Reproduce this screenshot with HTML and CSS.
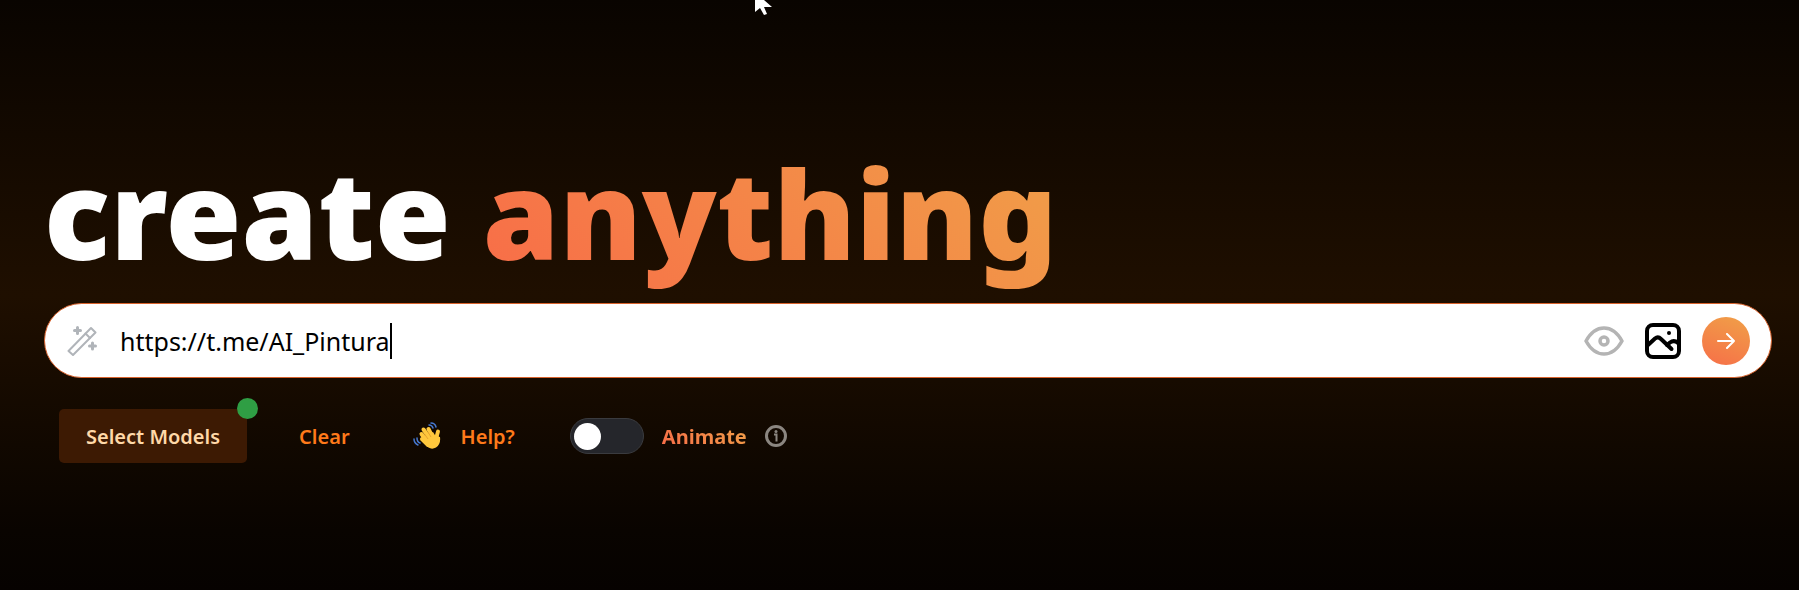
FILE: index.html
```html
<!DOCTYPE html>
<html lang="en">
<head>
    <meta charset="UTF-8">
    <meta name="viewport" content="width=device-width, initial-scale=1.0">
    <title>create anything</title>
    <link rel="stylesheet" href="styles.css">
</head>
<body>
    <svg class="cursor" viewBox="0 0 18 16" aria-hidden="true">
        <path d="M0 0V12L5 8L9 15L12 14L9 7H17L9 0Z" fill="#fff"/>
    </svg>

    <main class="hero">
        <h1>create <span class="gradient-text">anything</span></h1>

        <form class="prompt-bar">
            <svg class="wand" viewBox="0 0 30 30" aria-hidden="true">
                <g fill="none" stroke="#b0b4b9" stroke-width="2" stroke-linejoin="round" stroke-linecap="round">
                    <path d="M1.500 25L24 2L28.500 6.500L6 29Z"/>
                    <path d="M18.500 7.500L23 12"/>
                    <path d="M10.500 1.500V7.500M7.500 4.500H13.500M25.500 17V23M22.500 20H28.500" stroke-width="3"/>
                </g>
            </svg>
            <input type="text" class="prompt-input" aria-label="Prompt" value="https://t.me/AI_Pintura">
            <span class="caret"></span>

            <div class="prompt-tools">
                <button type="button" class="icon-button" aria-label="Preview">
                    <svg class="eye" viewBox="0 0 40 30" fill="none" stroke="#b4b4b4" stroke-width="3.500" stroke-linejoin="round">
                        <path d="M2 15C7 6 13 2 20 2S33 6 38 15C33 24 27 28 20 28S7 24 2 15Z"/>
                        <circle cx="20" cy="15" r="4"/>
                    </svg>
                </button>
                <button type="button" class="icon-button" aria-label="Add image">
                    <svg class="picture" viewBox="0 0 36 36" fill="none" stroke="#000" stroke-width="4" stroke-linecap="round" stroke-linejoin="round">
                        <rect x="2" y="2" width="32" height="32" rx="6"/>
                        <path d="M3 22L10 15.500Q13 13 16 16L26.500 26"/>
                        <path d="M22 22L25 19.500Q29 16.500 33 20"/>
                        <circle cx="24" cy="10" r="2" fill="#000" stroke="none"/>
                    </svg>
                </button>
                <button type="submit" class="go-button" aria-label="Create">
                    <svg class="arrow" viewBox="0 0 18 16" fill="none" stroke="#fff" stroke-width="2" stroke-linecap="round" stroke-linejoin="round">
                        <path d="M1 8H17M10 1L17 8L10 15"/>
                    </svg>
                </button>
            </div>
        </form>

        <div class="options">
            <button type="button" class="models">Select Models<span class="dot"></span></button>
            <button type="button" class="text-button clear">Clear</button>
            <button type="button" class="text-button help">
                <svg class="wave" viewBox="0 0 28 28" aria-hidden="true">
                    <g stroke="#ffc83d" stroke-linecap="round" fill="none" stroke-width="4">
                        <path d="M18 18L10.500 7.500"/>
                        <path d="M20 16L15.500 7"/>
                        <path d="M14 20L8.500 12"/>
                        <path d="M15 23L9 17"/>
                        <path d="M24 19Q23 14 25 9.500"/>
                    </g>
                    <path d="M11 14L20 10L22.500 14L27 15Q28 22 23 25.500Q17 29 12 22Z" fill="#ffc83d"/>
                    <path d="M11.500 12L15 17M15 10L18 15" stroke="#e9a52e" stroke-width="1" fill="none"/>
                    <g stroke="#4678cf" stroke-width="1.500" stroke-linecap="round" fill="none">
                        <path d="M16 3Q19 3 20 6M18 1Q22 1 23 5"/>
                        <path d="M4 16Q4 20 7 21M1 17Q1 21 5 23"/>
                    </g>
                </svg>
                Help?
            </button>
            <label class="animate">
                <input type="checkbox" class="toggle">
                <span class="gradient-text animate-label">Animate</span>
            </label>
            <svg class="info" viewBox="0 0 22 22" fill="none" stroke="#8b8680">
                <circle cx="11" cy="11" r="9.500" stroke-width="3"/>
                <path d="M9 9.500H11.500V16.500" stroke-width="2"/>
                <circle cx="11" cy="6.500" r="1.500" fill="#8b8680" stroke="none"/>
            </svg>
        </div>
    </main>
</body>
</html>
```

FILE: styles.css
```css
* {
    box-sizing: border-box;
}

body {
    margin: 0;
    min-height: 100vh;
    font-family: "Noto Sans", "Open Sans", sans-serif;
    color: #fff;
    background: linear-gradient(#090400 0%, #1f0f00 50%, #090400 90%, #060200 100%);
}

.cursor {
    position: absolute;
    left: 755px;
    top: 0;
    width: 18px;
    height: 16px;
}

.hero {
    padding: 143px 27px 0 44px;
}

h1 {
    margin: 0 0 20px;
    font-size: 123px;
    font-weight: 900;
    line-height: 140px;
    white-space: nowrap;
}

.gradient-text {
    color: transparent;
    background: linear-gradient(45deg, #f86c48, #f0a048);
    -webkit-background-clip: text;
    background-clip: text;
}

.prompt-bar {
    display: flex;
    align-items: center;
    height: 75px;
    padding: 0 21px 0 22px;
    background: #fff;
    border: 1px solid #d8622c;
    border-radius: 38px;
}

.wand {
    width: 30px;
    height: 30px;
    margin-right: 23px;
}

.prompt-input {
    field-sizing: content;
    padding: 0;
    border: none;
    outline: none;
    background: none;
    color: #000;
    font-family: inherit;
    font-size: 25px;
}

.caret {
    width: 2px;
    height: 36px;
    background: #000;
}

.prompt-tools {
    display: flex;
    align-items: center;
    gap: 21px;
    margin-left: auto;
}

.icon-button {
    display: flex;
    padding: 0;
    border: none;
    background: none;
    cursor: pointer;
}

.eye {
    width: 40px;
    height: 30px;
}

.picture {
    width: 36px;
    height: 36px;
}

.go-button {
    display: flex;
    align-items: center;
    justify-content: center;
    width: 48px;
    height: 48px;
    padding: 0;
    border: none;
    border-radius: 50%;
    background: linear-gradient(20deg, #f66f48, #f0a048);
    cursor: pointer;
}

.arrow {
    width: 18px;
    height: 16px;
}

.options {
    display: flex;
    align-items: center;
    padding: 31px 15px 0;
}

.models,
.text-button {
    height: 54px;
    border: none;
    background: none;
    color: #ff7a1a;
    font-family: inherit;
    font-size: 20px;
    font-weight: 600;
    white-space: nowrap;
    cursor: pointer;
}

.models {
    position: relative;
    padding: 0 27px;
    border-radius: 5px;
    background: #3d1a03;
    color: #ffd8a8;
}

.dot {
    position: absolute;
    top: -11px;
    right: -11px;
    width: 21px;
    height: 21px;
    border-radius: 50%;
    background: #2f9e44;
}

.text-button {
    display: flex;
    align-items: center;
    padding: 0;
}

.clear {
    margin-left: 52px;
}

.help {
    gap: 20px;
    margin-left: 63px;
}

.wave {
    width: 28px;
    height: 28px;
}

.animate {
    display: flex;
    align-items: center;
    gap: 18px;
    margin-left: 55px;
    cursor: pointer;
}

.toggle {
    appearance: none;
    display: flex;
    align-items: center;
    width: 74px;
    height: 36px;
    margin: 0;
    padding: 0 3px;
    border: 1px solid #3a3b3f;
    border-radius: 18px;
    background: #25262b;
}

.toggle::before {
    content: "";
    width: 27px;
    height: 27px;
    border-radius: 50%;
    background: #fff;
}

.toggle:checked {
    justify-content: flex-end;
}

.animate-label {
    font-size: 20px;
    font-weight: 700;
}

.info {
    width: 22px;
    height: 22px;
    margin-left: 18px;
}
```
